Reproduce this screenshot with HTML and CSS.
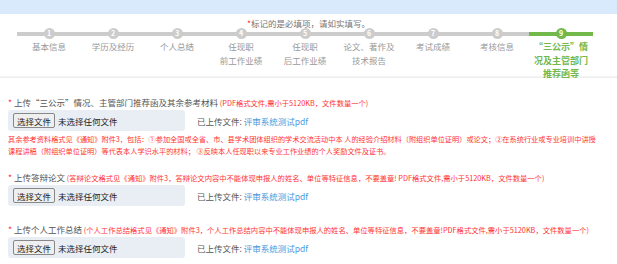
FILE: index.html
```html
<!DOCTYPE html>
<html lang="zh-CN">
<head>
    <meta charset="UTF-8">
    <meta name="viewport" content="width=device-width, initial-scale=1.0">
    <title>材料上传</title>
    <link rel="stylesheet" href="styles.css">
</head>
<body>

    <div class="topbar"></div>

    <div class="tip"><span class="req">*</span>标记的是必填项，请如实填写。</div>

    <ol class="steps">
        <li class="step"><span class="dot">1</span><span class="name">基本信息</span></li>
        <li class="step"><span class="dot">2</span><span class="name">学历及经历</span></li>
        <li class="step"><span class="dot">3</span><span class="name">个人总结</span></li>
        <li class="step"><span class="dot">4</span><span class="name">任现职<br>前工作业绩</span></li>
        <li class="step"><span class="dot">5</span><span class="name">任现职<br>后工作业绩</span></li>
        <li class="step"><span class="dot">6</span><span class="name">论文、著作及<br>技术报告</span></li>
        <li class="step"><span class="dot">7</span><span class="name">考试成绩</span></li>
        <li class="step"><span class="dot">8</span><span class="name">考核信息</span></li>
        <li class="step active"><span class="dot">9</span><span class="name">“三公示”情况及主管部门推荐函等</span></li>
    </ol>

    <div class="form">
        <div class="field">
            <div class="field-title"><span class="req">*</span> 上传“三公示”情况、主管部门推荐函及其余参考材料 <span class="hint">(PDF格式文件,需小于5120KB，文件数量一个)</span></div>
            <div class="upload-row">
                <div class="file-box">
                    <button class="file-btn" type="button">选择文件</button>
                    <span class="file-none">未选择任何文件</span>
                </div>
                <div class="uploaded">已上传文件: <a href="#">评审系统测试pdf</a></div>
            </div>
            <div class="note">其余参考资料格式见《通知》附件3，包括：①参加全国或全省、市、县学术团体组织的学术交流活动中本 人的经验介绍材料（附组织单位证明）或论文；②在系统行业或专业培训中讲授<br>课程讲稿（附组织单位证明）等代表本人学识水平的材料； ③反映本人任现职以来专业工作业绩的个人奖励文件及证书。</div>
        </div>

        <div class="field">
            <div class="field-title"><span class="req">*</span> 上传答辩论文 <span class="hint">(答辩论文格式见《通知》附件3，答辩论文内容中不能体现申报人的姓名、单位等特征信息，不要盖章! PDF格式文件,需小于5120KB，文件数量一个)</span></div>
            <div class="upload-row">
                <div class="file-box">
                    <button class="file-btn" type="button">选择文件</button>
                    <span class="file-none">未选择任何文件</span>
                </div>
                <div class="uploaded">已上传文件: <a href="#">评审系统测试pdf</a></div>
            </div>
        </div>

        <div class="field">
            <div class="field-title"><span class="req">*</span> 上传个人工作总结 <span class="hint">(个人工作总结格式见《通知》附件3，个人工作总结内容中不能体现申报人的姓名、单位等特征信息，不要盖章!PDF格式文件,需小于5120KB，文件数量一个)</span></div>
            <div class="upload-row">
                <div class="file-box">
                    <button class="file-btn" type="button">选择文件</button>
                    <span class="file-none">未选择任何文件</span>
                </div>
                <div class="uploaded">已上传文件: <a href="#">评审系统测试pdf</a></div>
            </div>
        </div>
    </div>

</body>
</html>
```

FILE: styles.css
```css
body {
    margin: 0;
    font-family: "Noto Sans CJK SC", "Noto Sans", sans-serif;
    font-size: 8.5px;
    color: #555;
    background: #fff;
    overflow: hidden;
}

.topbar {
    height: 14px;
    background-color: #d8eafb;
}

.req {
    color: #f33;
}

.tip {
    margin-top: 4px;
    line-height: 10px;
    text-align: center;
    color: #777;
}

.steps {
    list-style: none;
    margin: 0 0 0 17px;
    padding: 0;
    height: 49px;
    display: flex;
}

.step {
    width: 64px;
    display: flex;
    flex-direction: column;
    align-items: center;
    background: linear-gradient(#ccc, #ccc) no-repeat 0 4px / 100% 4px;
}

.step .dot {
    width: 11px;
    height: 11px;
    border-radius: 50%;
    background-color: #ccc;
    color: #fff;
    font-size: 7px;
    font-weight: bold;
    line-height: 11px;
    text-align: center;
}

.step .name {
    margin-top: 1px;
    line-height: 13.5px;
    color: #999;
    text-align: center;
}

.step.active {
    background-image: linear-gradient(#72b84a, #72b84a);
}

.step.active .dot {
    background-color: #72b84a;
}

.step.active .name {
    width: 56px;
    color: #72b84a;
    font-size: 9px;
    font-weight: bold;
}

.form {
    border-top: 1px solid #eee;
    box-shadow: 0 -1px 1px #f4f4f4;
    padding: 18px 8px 0;
}

.field {
    margin-bottom: 17px;
}

.field:last-child {
    margin-bottom: 0;
}

.field-title {
    line-height: 12px;
    margin-bottom: 1px;
    white-space: nowrap;
}

.field-title .hint {
    color: #f33;
    font-size: 7.3px;
}

.upload-row {
    display: flex;
    align-items: center;
    gap: 12px;
}

.file-box {
    width: 172px;
    height: 21px;
    padding-left: 5px;
    display: flex;
    align-items: center;
    background-color: #e9eef5;
    border-radius: 3px;
}

.file-btn {
    height: 15px;
    padding: 0 3px;
    margin-right: 3px;
    font-family: inherit;
    font-size: 8.5px;
    color: #222;
    background-color: #efefef;
    border: 1px solid #888;
    border-radius: 2px;
}

.file-none {
    color: #222;
}

.uploaded a {
    color: #4a9ae0;
    text-decoration: none;
}

.note {
    margin: 2px 0 -3px;
    line-height: 12px;
    font-size: 7.2px;
    color: #f33;
}
```
